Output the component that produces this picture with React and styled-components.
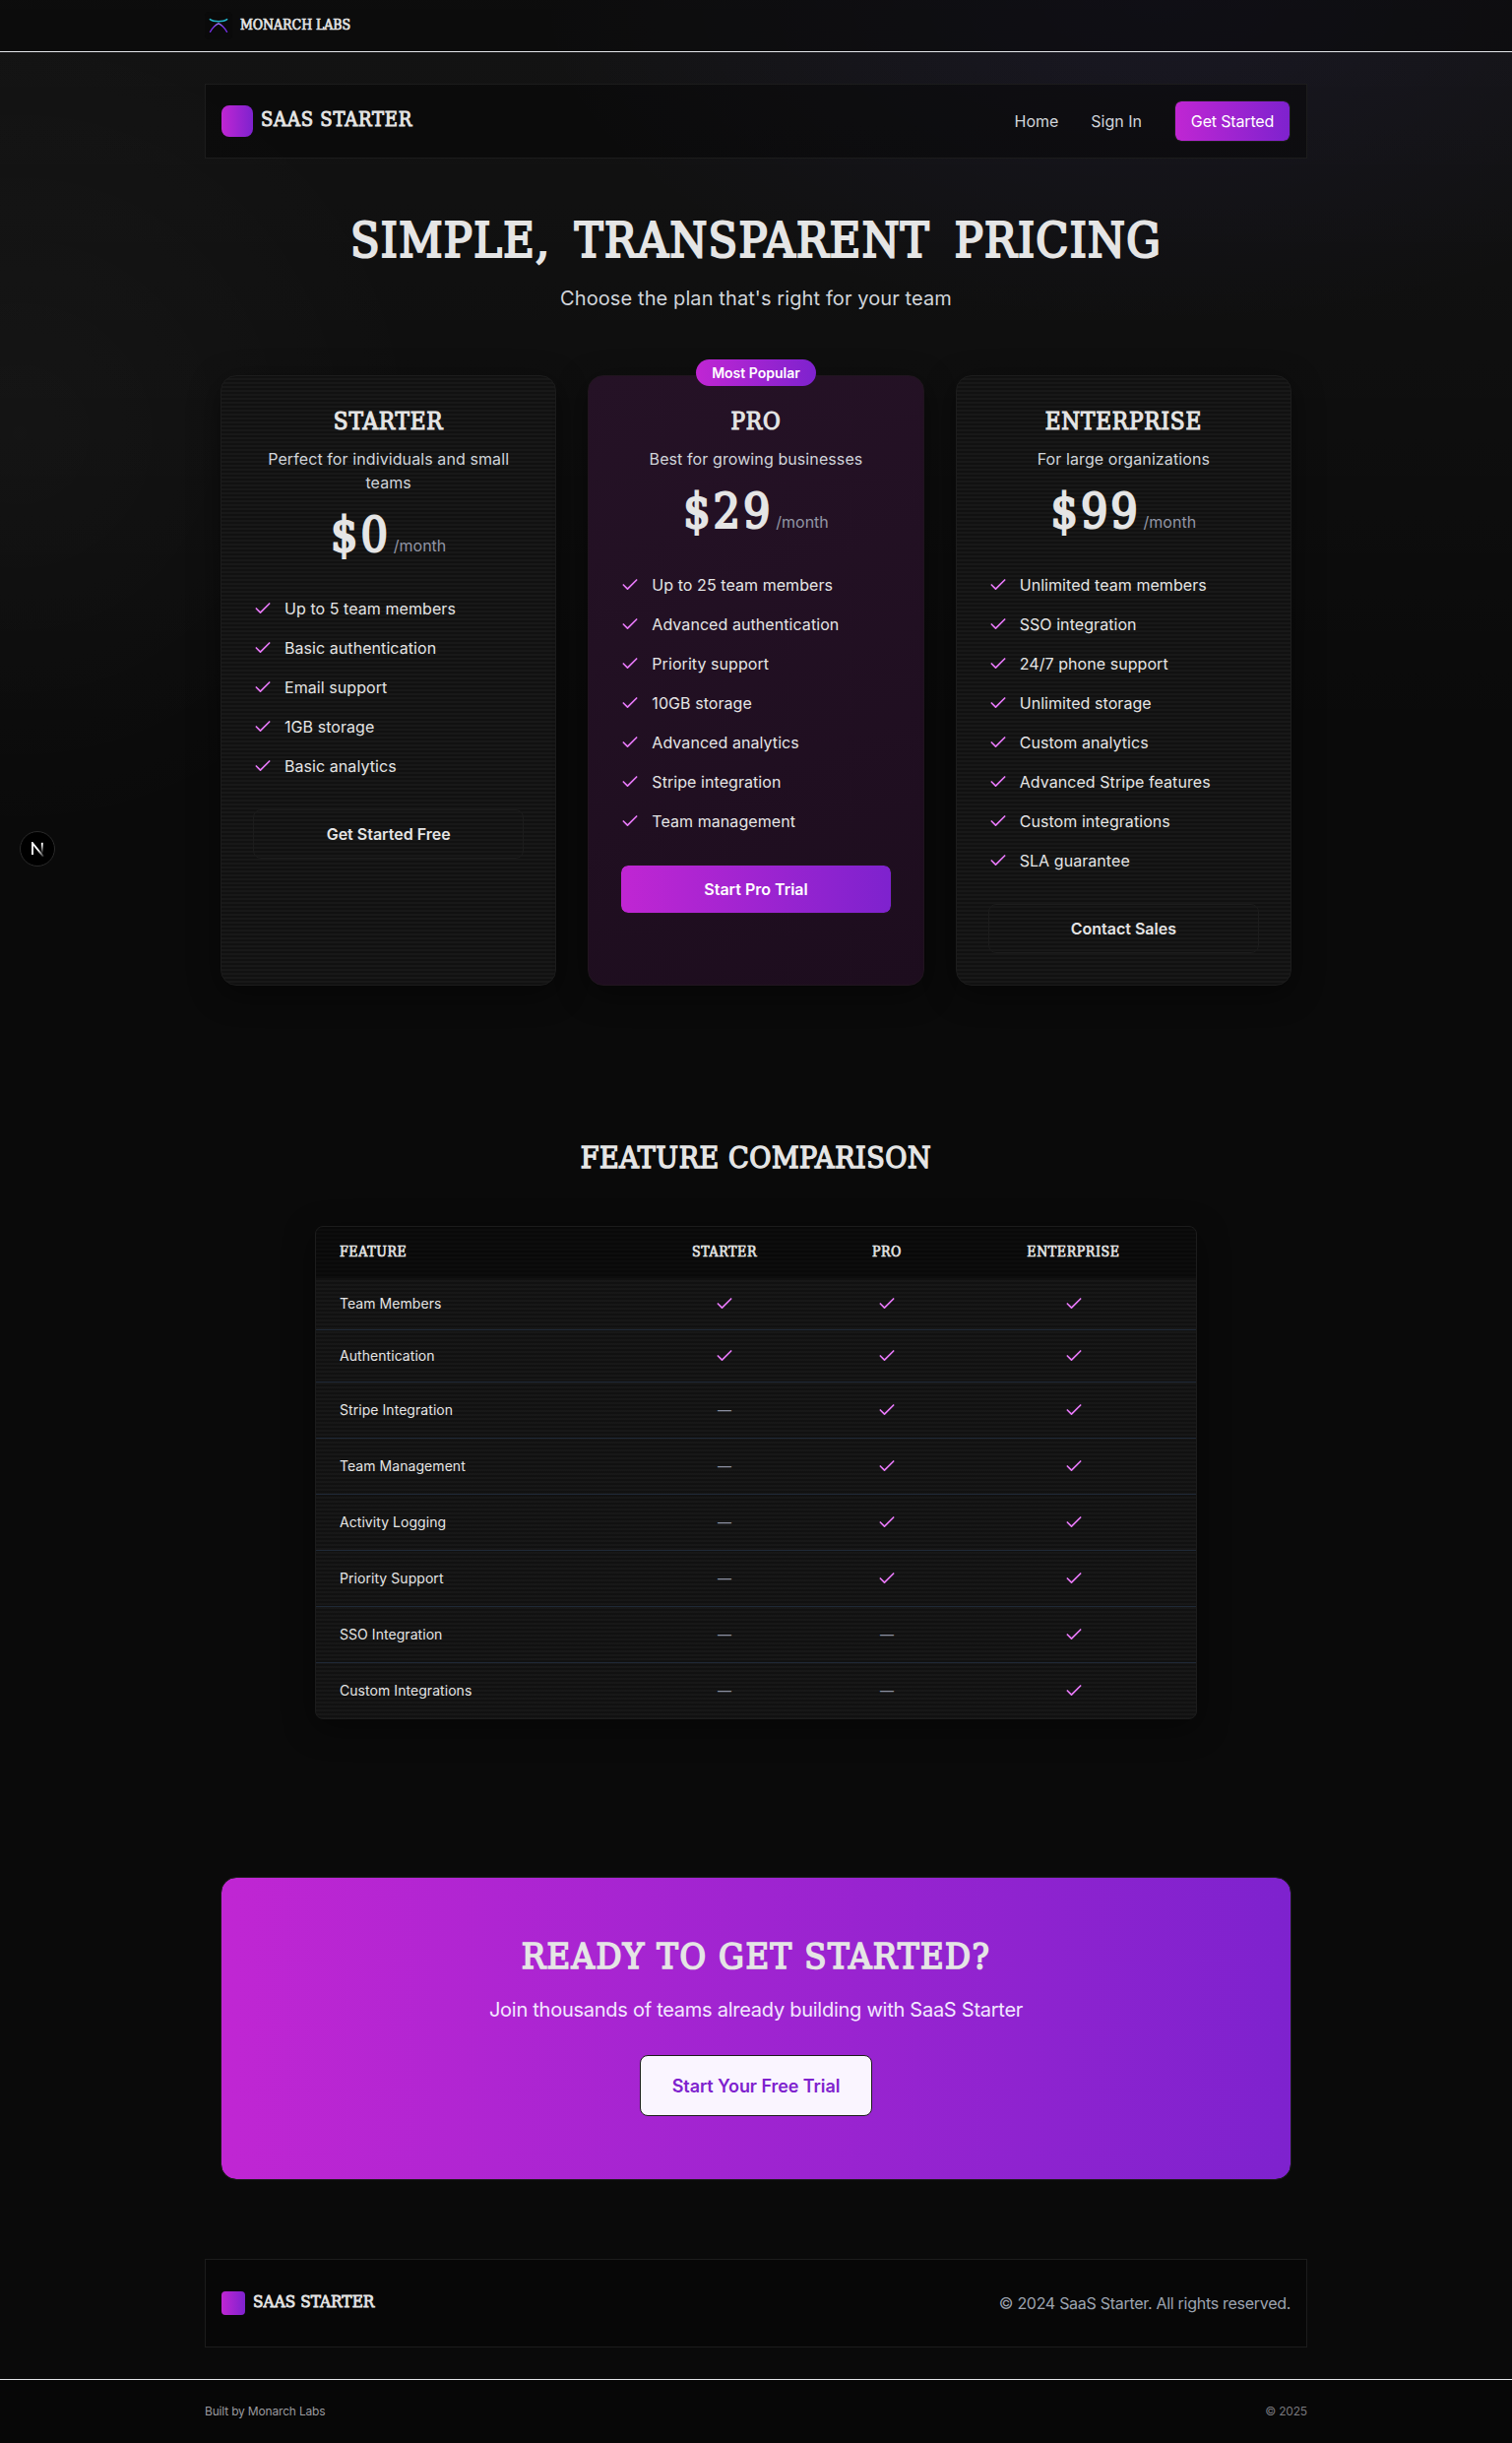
import React from "react";
import styled, { createGlobalStyle, css } from "styled-components";

const sans = `Inter, "Liberation Sans", sans-serif`;
const brandGradient = "linear-gradient(90deg, #c026d3, #7e22ce)";
const line = "#1c1c1c";

const GlobalStyle = createGlobalStyle`
  * { box-sizing: border-box; margin: 0; padding: 0; }
  body {
    background:
      radial-gradient(ellipse 640px 330px at 1180px 0, rgba(110, 90, 255, 0.07), transparent),
      radial-gradient(ellipse 420px 420px at 20px 440px, rgba(255, 255, 255, 0.028), transparent),
      linear-gradient(180deg, rgba(255, 255, 255, 0.038), transparent 760px),
      #0a0a0a;
    color: #e5e5e5;
    font-family: ${sans};
    font-size: 16px;
    line-height: 24px;
  }
`;

const scanlines = css`
  background:
    repeating-linear-gradient(180deg, transparent 0 2px, rgba(255, 255, 255, 0.027) 2px 4px),
    #111111;
`;

const display = css`
  font-family: "DejaVu Serif Condensed", "DejaVu Serif", serif;
  font-weight: 400;
  -webkit-text-stroke: 0.046em currentColor;
  white-space: nowrap;
  color: #e5e5e5;
`;

const Title = styled.h1`
  ${display}
  font-size: 48px;
  line-height: 60px;
  letter-spacing: 0.028em;
  word-spacing: 0.2em;
`;

const Heading = styled.h2`
  ${display}
  font-size: ${(p) => p.$size}px;
  line-height: ${(p) => p.$line}px;
  letter-spacing: ${(p) => p.$spacing || "0.035em"};
`;

const TopBar = styled.header`
  height: 53px;
  background: rgba(5, 5, 5, 0.45);
  border-bottom: 1px solid #e5e7eb;
`;

const Container = styled.div`
  width: 1120px;
  margin: 0 auto;
`;

const TopBarInner = styled(Container)`
  height: 52px;
  display: flex;
  align-items: center;
  gap: 8px;
`;

const LogoTile = styled.svg`
  width: 28px;
  height: 28px;
  background: #0a0a0a;
  border-radius: 4px;
`;

const Wordmark = styled.span`
  ${display}
  font-size: ${(p) => p.$size}px;
  line-height: 1;
  letter-spacing: ${(p) => p.$spacing};
  margin-bottom: ${(p) => p.$lift}px;
`;

const Page = styled(Container)`
  padding: 32px 0;
`;

const NavBar = styled.nav`
  height: 76px;
  padding: 0 16px;
  display: flex;
  align-items: center;
  justify-content: space-between;
  background: rgba(5, 5, 5, 0.45);
  border: 1px solid ${line};
`;

const Brand = styled.div`
  display: flex;
  align-items: center;
  gap: 8px;
`;

const BrandMark = styled.div`
  width: ${(p) => p.$size}px;
  height: ${(p) => p.$size}px;
  border-radius: ${(p) => p.$radius}px;
  background: ${brandGradient};
`;

const NavLinks = styled.div`
  display: flex;
  align-items: center;
  gap: 33px;
`;

const NavLink = styled.a`
  color: #d1d5db;
`;

const NavButton = styled.button`
  width: 118px;
  height: 42px;
  border: 1px solid ${line};
  border-radius: 7px;
  background: ${brandGradient} padding-box;
  color: #fff;
  font: 400 16px ${sans};
  letter-spacing: -0.01em;
`;

const Body = styled.main`
  padding: 0 16px;
`;

const Hero = styled.section`
  padding: 53px 0 64px;
  text-align: center;
`;

const HeroText = styled.p`
  margin-top: 15px;
  font-size: 20px;
  line-height: 28px;
  letter-spacing: 0.005em;
  color: #d1d5db;
`;

const Plans = styled.section`
  display: grid;
  grid-template-columns: repeat(3, 1fr);
  gap: 32px;
`;

const Plan = styled.article`
  position: relative;
  height: 620px;
  padding: 33px 32px 32px;
  border: 1px solid ${line};
  border-radius: 16px;
  text-align: center;
  box-shadow: 0 8px 32px rgba(0, 0, 0, 0.45);
  ${scanlines}
  ${(p) =>
    p.$featured &&
    css`
      background: linear-gradient(160deg, #251226, #1d0d1e);
      border-color: #21151f;
    `}
`;

const Badge = styled.div`
  position: absolute;
  top: -17px;
  left: 50%;
  transform: translateX(-50%);
  width: 122px;
  height: 27px;
  border-radius: 14px;
  background: ${brandGradient};
  color: #fff;
  font-size: 14px;
  font-weight: 600;
  line-height: 27px;
`;

const PlanText = styled.p`
  margin-top: 13px;
  color: #d1d5db;
  letter-spacing: 0.006em;
`;

const PriceRow = styled.div`
  margin: 17px 0 39px;
  display: flex;
  justify-content: center;
  align-items: baseline;
  gap: 3px;
  height: 48px;
`;

const Price = styled.span`
  ${display}
  font-size: 48px;
  line-height: 48px;
  letter-spacing: 0.06em;
`;

const Period = styled.span`
  color: #9296a5;
`;

const Features = styled.ul`
  list-style: none;
  display: grid;
  gap: 16px;
  margin-bottom: 32px;
`;

const Feature = styled.li`
  display: flex;
  align-items: center;
  gap: 12px;
  text-align: left;
  letter-spacing: 0.004em;
`;

const CheckSvg = styled.svg`
  width: 20px;
  height: 20px;
  flex: none;
  fill: none;
  stroke: #e879f9;
  stroke-width: 2;
  stroke-linecap: round;
  stroke-linejoin: round;
`;

const PlanButton = styled.button`
  display: block;
  width: 100%;
  height: 50px;
  border: 1px solid ${(p) => (p.$filled ? "#21151f" : line)};
  border-radius: 8px;
  background: ${(p) => (p.$filled ? `${brandGradient} padding-box` : "transparent")};
  color: ${(p) => (p.$filled ? "#fff" : "#e5e5e5")};
  font: 600 16px ${sans};
`;

const Comparison = styled.section`
  padding: 157px 0 160px;
  text-align: center;
`;

const Table = styled.div`
  width: 896px;
  margin: 51px auto 0;
  border: 1px solid ${line};
  border-radius: 8px;
  overflow: hidden;
  box-shadow: 0 8px 32px rgba(0, 0, 0, 0.45);
  ${scanlines}
`;

const rowGrid = css`
  display: grid;
  grid-template-columns: 315px 200px 130px 1fr;
  align-items: center;
  justify-items: center;
`;

const HeadRow = styled.div`
  ${rowGrid}
  height: 52px;
  background: rgba(0, 0, 0, 0.42);
`;

const HeadCell = styled.div`
  ${display}
  font-size: 14px;
  line-height: 20px;
  letter-spacing: 0.045em;
  margin-bottom: 2px;
  &:first-child {
    justify-self: start;
    padding-left: 24px;
  }
`;

const Row = styled.div`
  ${rowGrid}
  height: ${(p) => (p.$compact ? 53 : 57)}px;
  border-bottom: 1px solid #1f2937;
  &:last-child {
    height: 56px;
    border-bottom: 0;
  }
`;

const RowLabel = styled.div`
  justify-self: start;
  padding-left: 24px;
  font-size: 14px;
  letter-spacing: 0.004em;
`;

const Dash = styled.span`
  color: #8b8fa0;
  font-size: 14px;
`;

const Cta = styled.section`
  height: 308px;
  padding-top: 60px;
  border: 1px solid ${line};
  border-radius: 16px;
  background: ${brandGradient} padding-box;
  text-align: center;
`;

const CtaText = styled.p`
  margin-top: 20px;
  font-size: 20px;
  line-height: 28px;
  letter-spacing: -0.013em;
  color: #f3e8ff;
`;

const CtaButton = styled.button`
  margin-top: 32px;
  width: 236px;
  height: 62px;
  border: 1px solid ${line};
  border-radius: 8px;
  background: #faf5ff;
  color: #7e22ce;
  font: 600 18px ${sans};
  letter-spacing: -0.004em;
`;

const SiteFooter = styled.footer`
  margin-top: 80px;
  height: 90px;
  padding: 0 16px;
  display: flex;
  align-items: center;
  justify-content: space-between;
  background: #070707;
  border: 1px solid ${line};
`;

const Copyright = styled.p`
  color: #9ca3af;
  letter-spacing: -0.018em;
`;

const BottomBar = styled.footer`
  height: 65px;
  background: #070707;
  border-top: 1px solid #e5e7eb;
`;

const BottomInner = styled(Container)`
  height: 64px;
  display: flex;
  align-items: center;
  justify-content: space-between;
  font-size: 12px;
  letter-spacing: -0.015em;
  color: #9a9a9f;
`;

const Muted = styled.span`
  color: #77777c;
`;

const DevBadge = styled.div`
  position: fixed;
  left: 20px;
  top: 844px;
  width: 36px;
  height: 36px;
  border-radius: 50%;
  background: #000;
  border: 1px solid #2b2b2b;
  display: flex;
  align-items: center;
  justify-content: center;
`;

const Check = () => (
  <CheckSvg viewBox="0 0 24 24">
    <path d="M20 6 9 17l-5-5" />
  </CheckSvg>
);

const MonarchLogo = () => (
  <LogoTile viewBox="0 0 28 28" fill="none" strokeWidth="1.4" strokeLinecap="round">
    <defs>
      <linearGradient id="wing" x1="14" y1="11" x2="14" y2="21" gradientUnits="userSpaceOnUse">
        <stop stopColor="#a78bfa" />
        <stop offset="0.4" stopColor="#7c3aed" />
        <stop offset="1" stopColor="#6d28d9" />
      </linearGradient>
    </defs>
    <path d="M5.5 20.3C8 16 11 13 14 11.8C17 13 20 16 22.5 20.3" stroke="url(#wing)" />
    <path d="M5.3 7.6C9 10.4 19 10.4 22.7 7.6" stroke="#22b8cf" />
  </LogoTile>
);

const NextLogo = () => (
  <svg width="14" height="15" viewBox="0 0 14 15" fill="none" strokeWidth="1.9">
    <defs>
      <linearGradient id="diag" x1="8" y1="8" x2="13" y2="14.5" gradientUnits="userSpaceOnUse">
        <stop stopColor="#fff" />
        <stop offset="1" stopColor="#fff" stopOpacity="0.2" />
      </linearGradient>
      <linearGradient id="stem" x1="11.8" y1="2" x2="11.8" y2="12" gradientUnits="userSpaceOnUse">
        <stop stopColor="#fff" />
        <stop offset="1" stopColor="#fff" stopOpacity="0" />
      </linearGradient>
    </defs>
    <path d="M13 14.8 2 1.2V13" stroke="url(#diag)" />
    <path d="M11.8 0.8V12" stroke="url(#stem)" />
  </svg>
);

const plans = [
  {
    name: "STARTER",
    text: "Perfect for individuals and small teams",
    price: "$0",
    action: "Get Started Free",
    features: ["Up to 5 team members", "Basic authentication", "Email support", "1GB storage", "Basic analytics"],
  },
  {
    name: "PRO",
    text: "Best for growing businesses",
    price: "$29",
    action: "Start Pro Trial",
    featured: true,
    features: [
      "Up to 25 team members",
      "Advanced authentication",
      "Priority support",
      "10GB storage",
      "Advanced analytics",
      "Stripe integration",
      "Team management",
    ],
  },
  {
    name: "ENTERPRISE",
    text: "For large organizations",
    price: "$99",
    action: "Contact Sales",
    features: [
      "Unlimited team members",
      "SSO integration",
      "24/7 phone support",
      "Unlimited storage",
      "Custom analytics",
      "Advanced Stripe features",
      "Custom integrations",
      "SLA guarantee",
    ],
  },
];

const comparison = [
  ["Team Members", true, true, true],
  ["Authentication", true, true, true],
  ["Stripe Integration", false, true, true],
  ["Team Management", false, true, true],
  ["Activity Logging", false, true, true],
  ["Priority Support", false, true, true],
  ["SSO Integration", false, false, true],
  ["Custom Integrations", false, false, true],
];

export default function App() {
  return (
    <>
      <GlobalStyle />
      <TopBar>
        <TopBarInner>
          <MonarchLogo />
          <Wordmark $size={14} $spacing="-0.004em" $lift={3}>MONARCH LABS</Wordmark>
        </TopBarInner>
      </TopBar>
      <Page>
        <NavBar>
          <Brand>
            <BrandMark $size={32} $radius={8} />
            <Wordmark $size={20} $spacing="0.04em" $lift={4}>SAAS STARTER</Wordmark>
          </Brand>
          <NavLinks>
            <NavLink>Home</NavLink>
            <NavLink>Sign In</NavLink>
            <NavButton>Get Started</NavButton>
          </NavLinks>
        </NavBar>
        <Body>
          <Hero>
            <Title>SIMPLE, TRANSPARENT PRICING</Title>
            <HeroText>Choose the plan that's right for your team</HeroText>
          </Hero>
          <Plans>
            {plans.map((plan) => (
              <Plan key={plan.name} $featured={plan.featured}>
                {plan.featured && <Badge>Most Popular</Badge>}
                <Heading as="h3" $size={24} $line={26}>{plan.name}</Heading>
                <PlanText>{plan.text}</PlanText>
                <PriceRow>
                  <Price>{plan.price}</Price>
                  <Period>/month</Period>
                </PriceRow>
                <Features>
                  {plan.features.map((f) => (
                    <Feature key={f}>
                      <Check />
                      {f}
                    </Feature>
                  ))}
                </Features>
                <PlanButton $filled={plan.featured}>{plan.action}</PlanButton>
              </Plan>
            ))}
          </Plans>
          <Comparison>
            <Heading $size={30} $line={36} $spacing="0.019em">FEATURE COMPARISON</Heading>
            <Table>
              <HeadRow>
                {["FEATURE", "STARTER", "PRO", "ENTERPRISE"].map((h) => (
                  <HeadCell key={h}>{h}</HeadCell>
                ))}
              </HeadRow>
              {comparison.map(([label, ...cells], i) => (
                <Row key={label} $compact={i < 2}>
                  <RowLabel>{label}</RowLabel>
                  {cells.map((on, j) => (on ? <Check key={j} /> : <Dash key={j}>—</Dash>))}
                </Row>
              ))}
            </Table>
          </Comparison>
          <Cta>
            <Heading $size={36} $line={40} $spacing="0.04em">READY TO GET STARTED?</Heading>
            <CtaText>Join thousands of teams already building with SaaS Starter</CtaText>
            <CtaButton>Start Your Free Trial</CtaButton>
          </Cta>
        </Body>
        <SiteFooter>
          <Brand>
            <BrandMark $size={24} $radius={4} />
            <Wordmark $size={17} $spacing="0.003em" $lift={4}>SAAS STARTER</Wordmark>
          </Brand>
          <Copyright>© 2024 SaaS Starter. All rights reserved.</Copyright>
        </SiteFooter>
      </Page>
      <BottomBar>
        <BottomInner>
          <span>Built by Monarch Labs</span>
          <Muted>© 2025</Muted>
        </BottomInner>
      </BottomBar>
      <DevBadge>
        <NextLogo />
      </DevBadge>
    </>
  );
}
